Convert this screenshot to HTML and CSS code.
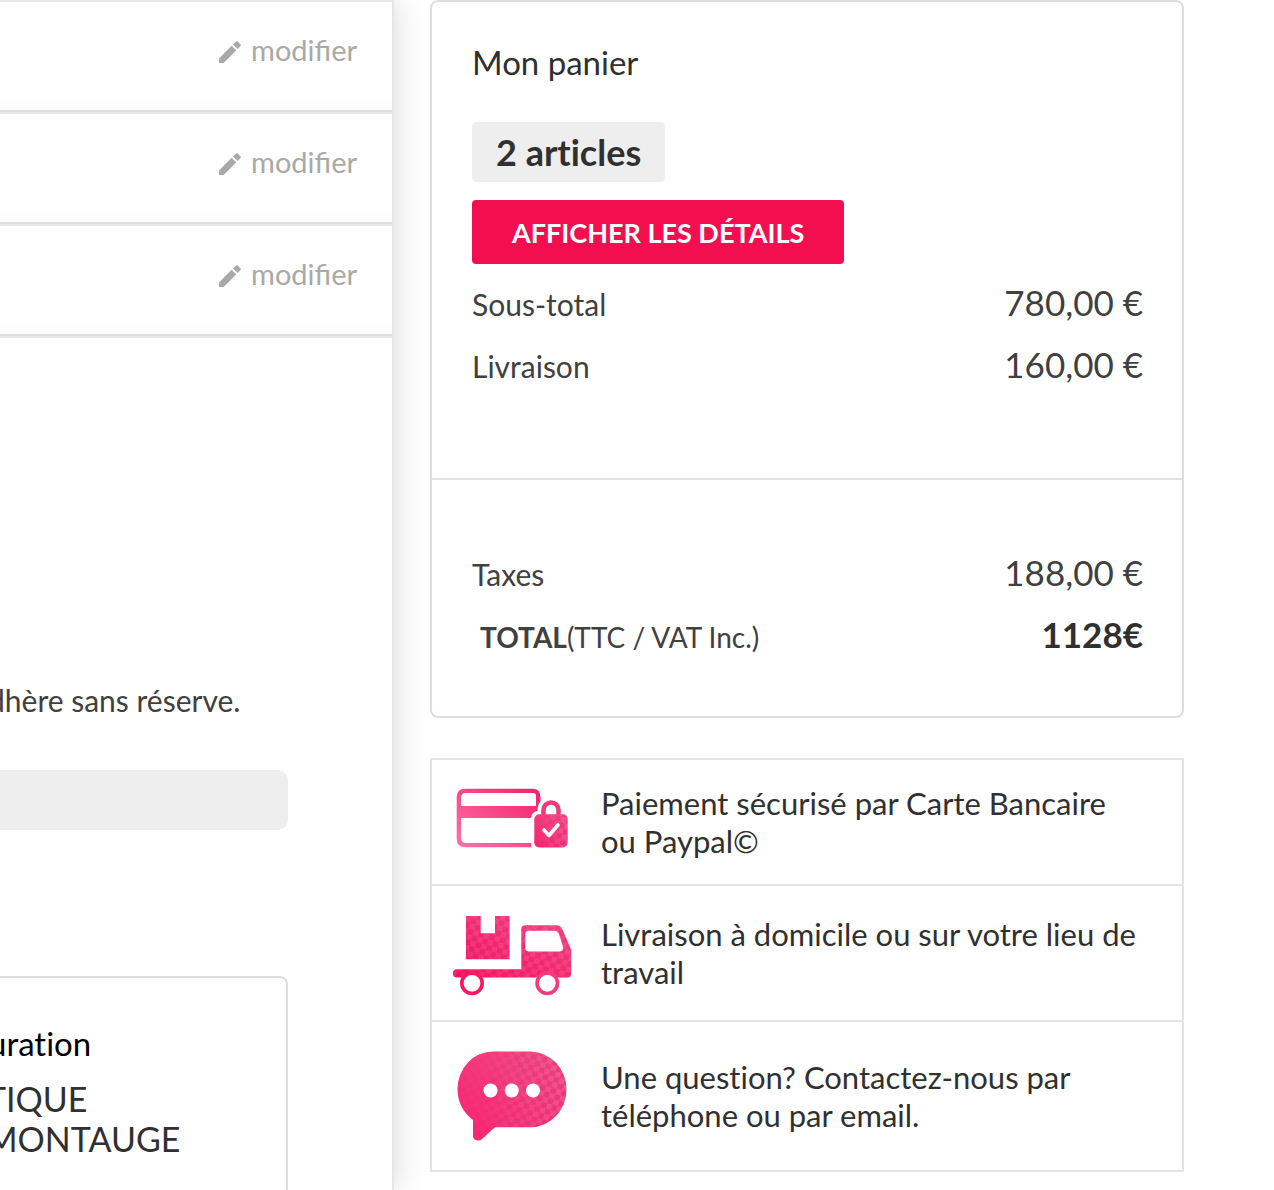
FILE: index.html
```html
<!DOCTYPE html>
<html lang="fr">
<head>
<meta charset="utf-8">
<title>Mon panier</title>
<link rel="stylesheet" href="styles.css">
</head>
<body>
<div class="page">
  <main class="checkout">
    <ul class="steps">
      <li class="step"><a class="edit" href="#"><svg class="pencil" viewBox="0 0 22 22" aria-hidden="true"><path d="M0 17.400 12.600 4.800 17.200 9.400 4.600 22H0zM14 3.400 16.600.8Q17.800-.4 19 .8L21.200 3Q22.400 4.200 21.200 5.400L18.600 8z"/></svg>modifier</a></li>
      <li class="step"><a class="edit" href="#"><svg class="pencil" viewBox="0 0 22 22" aria-hidden="true"><path d="M0 17.400 12.600 4.800 17.200 9.400 4.600 22H0zM14 3.400 16.600.8Q17.800-.4 19 .8L21.200 3Q22.400 4.200 21.200 5.400L18.600 8z"/></svg>modifier</a></li>
      <li class="step"><a class="edit" href="#"><svg class="pencil" viewBox="0 0 22 22" aria-hidden="true"><path d="M0 17.400 12.600 4.800 17.200 9.400 4.600 22H0zM14 3.400 16.600.8Q17.800-.4 19 .8L21.200 3Q22.400 4.200 21.200 5.400L18.600 8z"/></svg>modifier</a></li>
    </ul>
    <p class="terms">dhère sans réserve.</p>
    <div class="placeholder"></div>
    <section class="billing">
      <h2 class="billing-title">uration</h2>
      <p class="address">TIQUE<br>MONTAUGE</p>
    </section>
  </main>

  <aside class="sidebar">
    <section class="cart">
      <div class="cart-top">
        <h1 class="cart-title">Mon panier</h1>
        <span class="count">2 articles</span>
        <button class="details" type="button">AFFICHER LES DÉTAILS</button>
        <dl class="lines">
          <div class="line"><dt>Sous-total</dt><dd>780,00 €</dd></div>
          <div class="line"><dt>Livraison</dt><dd>160,00 €</dd></div>
        </dl>
      </div>
      <dl class="cart-bottom">
        <div class="line"><dt>Taxes</dt><dd>188,00 €</dd></div>
        <div class="line total"><dt><strong>TOTAL</strong>(TTC / VAT Inc.)</dt><dd>1128€</dd></div>
      </dl>
    </section>

    <ul class="features">
      <li class="feature">
        <svg class="icon" width="120" height="76" viewBox="452 784 120 76" aria-hidden="true">
          <defs>
            <linearGradient id="card" x1="0" y1="1" x2="1" y2="0"><stop offset="0" stop-color="#ff72a8"/><stop offset="1" stop-color="#f3206a"/></linearGradient>
            <linearGradient id="pink" x1="0" y1="1" x2="1" y2="0"><stop offset="0" stop-color="#f8236f"/><stop offset="1" stop-color="#f04a86"/></linearGradient>
            <linearGradient id="truck" x1="0" y1="1" x2="1" y2="0"><stop offset="0" stop-color="#f80f5f"/><stop offset="1" stop-color="#f24c88"/></linearGradient>
            <pattern id="checks" width="11" height="11" patternUnits="userSpaceOnUse" patternTransform="rotate(15)"><path d="M0 0h5.500v5.500H0zM5.500 5.500H11V11H5.500z" fill="#fff" fill-opacity=".1"/><path d="M5.500 0H11v5.500H5.500zM0 5.500h5.500V11H0z" fill="#a00048" fill-opacity=".1"/></pattern>
            <linearGradient id="fade"><stop offset=".25" stop-color="#222"/><stop offset="1" stop-color="#fff"/></linearGradient>
            <mask id="fadeLock" maskContentUnits="objectBoundingBox"><path d="M0 0h1v1H0z" fill="url(#fade)"/></mask>
          </defs>
          <path d="M465.500 788.700H532.500Q540.500 788.700 540.500 797V839.500Q540.500 847.300 532.500 847.300H465.500Q456.700 847.300 456.700 839V797Q456.700 788.700 465.500 788.700zM461 806H536V796Q536 793 533 793H466Q461 793 461 798zM461 818V838Q461 843 466 843H536V818z" fill="url(#card)" fill-rule="evenodd"/>
          <path d="M543.500 816v-6a7.500 7.500 0 0 1 15 0v6" fill="none" stroke="#fff" stroke-width="12"/>
          <rect x="531" y="811" width="40" height="40" rx="7" fill="#fff"/>
          <path d="M543.500 816v-6a7.500 7.500 0 0 1 15 0v6" fill="none" stroke="#ed3c7c" stroke-width="4.600"/>
          <rect x="534.300" y="814.300" width="33.400" height="33.200" rx="5" fill="url(#pink)"/>
          <rect x="534.300" y="814.300" width="33.400" height="33.200" rx="5" fill="url(#checks)" mask="url(#fadeLock)"/>
          <path d="m544 830 5 5.500 9-10.500" fill="none" stroke="#fff" stroke-width="3.600" stroke-linecap="round" stroke-linejoin="round"/>
        </svg>
        <p class="feature-text">Paiement sécurisé par Carte Bancaire ou Paypal©</p>
      </li>
      <li class="feature">
        <svg class="icon" width="120" height="86" viewBox="452 910 120 86" aria-hidden="true">
          <defs><path id="truckShape" fill-rule="evenodd" d="M466 916H480.700V933.200H495V916H509.500V959.300H466zM521.300 969.300V929.500Q521.300 925.300 525.500 925.300H556Q560.500 925.300 562.500 929.500L571.200 950V973.500Q571.200 977.500 567.500 977.500H457A4.100 4.100 0 0 1 457 969.300zM525.300 934.500V948Q525.300 951.500 529 951.500H559.500Q563.500 951.500 563 947L559 934Q557.500 930.800 554 930.800H529Q525.300 930.800 525.300 934.500z"/></defs>
          <use href="#truckShape" fill="url(#truck)"/>
          <use href="#truckShape" fill="url(#checks)" opacity=".7"/>
          <circle cx="472" cy="983.300" r="10.200" fill="#fff" stroke="#f51863" stroke-width="3.600"/>
          <circle cx="547.300" cy="983.300" r="10.200" fill="#fff" stroke="#f53b7e" stroke-width="3.600"/>
        </svg>
        <p class="feature-text">Livraison à domicile ou sur votre lieu de travail</p>
      </li>
      <li class="feature">
        <svg class="icon" width="120" height="100" viewBox="452 1046 120 100" aria-hidden="true">
          <defs><path id="bubble" d="M493 1051.500H530A36.500 37.900 0 0 1 530 1127.300H495L482 1139Q479 1141.500 476 1140Q473 1139 473 1136V1120Q457.500 1108 457.500 1089A35.500 37.500 0 0 1 493 1051.500z"/>
          <mask id="fadeBubble" maskContentUnits="objectBoundingBox"><path d="M0 0h1v1H0z" fill="url(#fade)"/></mask></defs>
          <use href="#bubble" fill="url(#pink)"/>
          <use href="#bubble" fill="url(#checks)" mask="url(#fadeBubble)"/>
          <g fill="#fff"><circle cx="490.500" cy="1090.500" r="7"/><circle cx="511.800" cy="1090.500" r="7"/><circle cx="533" cy="1090.500" r="7"/></g>
        </svg>
        <p class="feature-text">Une question? Contactez-nous par téléphone ou par email.</p>
      </li>
    </ul>
  </aside>
</div>
</body>
</html>
```
FILE: styles.css
```css
* { box-sizing: border-box; margin: 0; padding: 0; }

body {
  background: #fff;
  color: #303030;
  font-family: Lato, "Open Sans", sans-serif;
  font-variant-ligatures: none;
  line-height: 40px;
  overflow-x: hidden;
}

ul { list-style: none; }

.page {
  display: grid;
  grid-template-columns: minmax(0, 394fr) minmax(0, 754fr);
  gap: 36px;
  min-height: 100vh;
  padding-right: 90px;
}

/* Checkout column */
.checkout {
  display: flex;
  flex-direction: column;
  border-right: 2px solid #e6e6e6;
  box-shadow: 4px 0 28px rgba(0, 0, 0, .13);
}

.step {
  display: flex;
  justify-content: flex-end;
  padding: 28px 35px 40px 0;
  border-top: 2px solid #e8e8e8;
  border-bottom: 2px solid #dfdfdf;
  background: linear-gradient(to top, #fafafa, #fff 12px);
}

.steps { border-bottom: 2px solid #e8e8e8; }

.edit {
  display: flex;
  align-items: center;
  gap: 10px;
  color: #aaa9a5;
  font-size: 29px;
  font-variant-ligatures: normal;
  text-decoration: none;
}

.pencil { width: 22px; height: 22px; margin-top: 4px; fill: #a9a9a9; }

.terms {
  margin: 342px 0 0 -12px;
  color: #404040;
  font-size: 30px;
  white-space: nowrap;
}

.placeholder {
  height: 60px;
  margin: 50px 104px 0 0;
  border-radius: 0 10px 10px 0;
  background: #eee;
}

.billing {
  flex: 1;
  margin: 146px 104px 0 0;
  padding-top: 45px;
  border: solid #dedede;
  border-width: 2px 2px 0 0;
  border-top-right-radius: 8px;
}

.billing-title {
  margin-left: -12px;
  color: #000;
  font-size: 33px;
  font-weight: 400;
}

.address { margin: 16px 0 0 -14px; font-size: 34px; }

/* Cart summary */
.cart {
  border: 2px solid #dedede;
  border-radius: 8px;
}

.cart-top {
  display: flex;
  flex-direction: column;
  align-items: flex-start;
  padding: 40px 39px 82px 40px;
  border-bottom: 2px solid #e2e2e2;
}

.cart-title { font-size: 33px; font-weight: 400; }

.count {
  margin-top: 40px;
  padding: 0 24px;
  border-radius: 4px;
  background: #eee;
  font-size: 36px;
  font-weight: 700;
  line-height: 60px;
}

.details {
  height: 64px;
  margin-top: 18px;
  padding: 0 40px;
  border: 0;
  border-radius: 4px;
  background: #f30f4f;
  color: #fff;
  font: 700 27px Lato, "Open Sans", sans-serif;
}

.lines { align-self: stretch; margin-top: 8px; }

.cart-bottom { padding: 62px 39px 50px 40px; }

.line {
  display: flex;
  justify-content: space-between;
  align-items: baseline;
  height: 62px;
  color: #404040;
  font-size: 30px;
  line-height: 60px;
}

.line dd { font-size: 35px; }

.total { padding-left: 8px; font-size: 28px; }
.total dd { font-weight: 700; color: #303030; }

/* Service promises */
.features {
  margin-top: 40px;
  border: 2px solid #e4e4e4;
}

.feature {
  display: flex;
  align-items: center;
  gap: 29px;
  padding: 24px 36px 24px 20px;
}

.feature + .feature { border-top: 2px solid #e4e4e4; }

.icon { flex: none; }

.feature-text { font-size: 31px; line-height: 38px; }
```
